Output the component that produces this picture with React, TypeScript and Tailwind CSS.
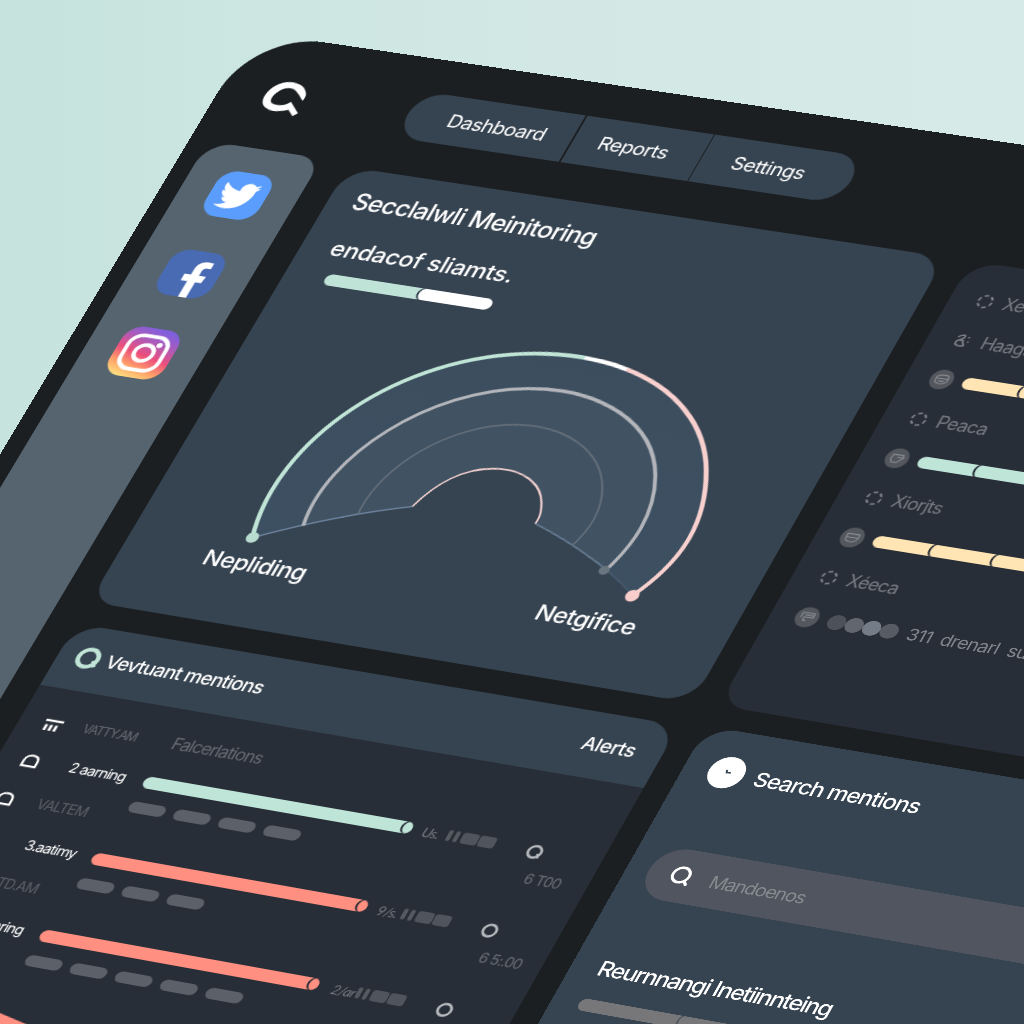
import { FaFacebookF, FaTwitter } from "react-icons/fa";
import clsx from "clsx";

interface Mention {
  label: string;
  time: string;
  stat: string;
  color: string;
  indent: string;
  labelWidth: string;
  barWidth: string;
  chips: number;
  clock: string;
  tail?: boolean;
}

const mentions: Mention[] = [
  {
    label: "2 aarning",
    time: "VALTEM",
    stat: "Us.",
    color: "bg-[#bfe4d8]",
    indent: "left-[148px]",
    labelWidth: "w-[129px]",
    barWidth: "w-[268px]",
    chips: 4,
    clock: "6 T00",
    tail: true,
  },
  {
    label: "3.aatimy",
    time: "STD.AM",
    stat: "9/s.",
    color: "bg-[#ff8f80]",
    indent: "left-[142px]",
    labelWidth: "w-[125px]",
    barWidth: "w-[274px]",
    chips: 3,
    clock: "6 5:.00",
  },
  {
    label: "3.amring",
    time: "STD.AM",
    stat: "2/ar",
    color: "bg-[#ff8f80]",
    indent: "left-[136px]",
    labelWidth: "w-[118px]",
    barWidth: "w-[277px]",
    chips: 5,
    clock: "6 5:.00",
  },
];

const App = () => {
  return (
    <div className="relative h-screen w-full overflow-hidden bg-linear-to-r from-[#c6e3dd] via-[#d2e8e4] to-[#d6ebe8] font-['Inter','Liberation_Sans',sans-serif] text-white">
      {/* tilted device */}
      <div className="flex h-[1260px] w-[1500px] origin-top-left flex-col rounded-[72px] bg-[#1b1f22] [transform:matrix3d(0.95978,0.14095,0,-0.000034617,-0.51195,0.83549,0,-0.000033957,0,0,1,0,256.7,32.4,0,1.010332)]">
        <Header />
        <div className="flex flex-1 pl-[19px]">
          <Sidebar />
          <main className="ml-[29px] flex w-[602px] flex-col gap-[25px]">
            <GaugeCard />
            <MentionsCard />
          </main>
          <aside className="ml-[25px] flex w-[650px] flex-col gap-[25px]">
            <SourcesCard />
            <SearchCard />
          </aside>
        </div>
      </div>
    </div>
  );
};

const Header = () => (
  <header className="flex h-[133px] shrink-0 items-start pl-[45px]">
    <svg viewBox="-22 -22 44 44" className="mt-[47px] h-11 w-11" fill="white">
      <path d="M18.8 -0.9 C19.5 -4 19 -7 18.2 -8.7 C14 -17 5 -20.5 -4 -19.6 C-12 -18.5 -17.5 -13 -19.4 -6.2 C-21 -1 -20.5 4 -18.4 7.6 C-15 13 -8 15.5 -1.5 14.9 C3 14.5 7 13 10.3 11.3 L17.7 17.6 L21.4 13.4 L8.3 2.1 C6 5.5 3 7.2 -0.2 7.6 C-5 8.2 -9.5 7.5 -11.1 5.1 C-13 2 -12.5 -2.5 -10.5 -5.7 C-8.5 -9.5 -6 -11.5 -3.5 -12.2 C1 -13.3 4 -12.5 6.8 -10.7 C11 -8 14.5 -4.5 18.8 -0.9 Z" />
    </svg>
    <nav className="mt-[38px] ml-[104px] flex h-[55px] w-[449px] gap-[1.5px] overflow-hidden rounded-full text-[20px] leading-[56px] tracking-tight whitespace-nowrap">
      <a className="w-[168px] bg-[#364350] pl-[42px]">Dashboard</a>
      <a className="w-[128px] bg-[#364350] pl-[26px]">Reports</a>
      <a className="flex-1 bg-[#364350] pl-[31px]">Settings</a>
    </nav>
  </header>
);

const Sidebar = () => (
  <div className="-mt-[5px] flex w-[118px] flex-col items-center gap-10 rounded-tl-[27px] rounded-tr-[23px] bg-[#56646f] pt-7">
    <div className="flex h-[53px] w-[56px] items-center justify-center rounded-[17px] bg-[#5a9dfc]">
      <FaTwitter className="h-[38px] w-[38px]" />
    </div>
    <div className="flex h-[53px] w-[56px] items-end justify-center overflow-hidden rounded-[17px] bg-[#486bb3] pl-2.5">
      <FaFacebookF className="h-[42px] w-[32px]" />
    </div>
    <svg viewBox="0 0 56 56" className="-mt-[2px] h-[57px] w-[58px]" fill="none" preserveAspectRatio="none">
      <defs>
        <linearGradient id="ig" x1="0.25" y1="1.02" x2="0.5" y2="0">
          <stop offset="0" stopColor="#ffe883" />
          <stop offset="0.25" stopColor="#ffa168" />
          <stop offset="0.5" stopColor="#ec4f7c" />
          <stop offset="0.78" stopColor="#a95bbd" />
          <stop offset="1" stopColor="#805fdc" />
        </linearGradient>
      </defs>
      <rect width="56" height="56" rx="17" fill="url(#ig)" />
      <rect x="9" y="9" width="38" height="38" rx="12" stroke="white" strokeWidth="4" />
      <circle cx="28" cy="28" r="9" stroke="white" strokeWidth="4" />
      <circle cx="38.5" cy="17.5" r="2.8" fill="white" />
    </svg>
  </div>
);

const OUTER =
  "M113.8 412.6 C82 306.4 150.5 192.8 275.5 170.2 C367.5 153.5 457.2 191.5 493.6 265.2 C522.2 322.6 517.8 365.5 491.5 407.9";
const MIDDLE =
  "M154.3 391.3 C136.7 313.7 197.3 225 287.9 208.4 C358.5 195.7 423.8 226.4 450 279 C470.8 320.8 465.6 356 454.6 385.4";
const INNER =
  "M198.5 369.3 C192.9 315 235.2 259.8 294.2 249 C341 240.5 388.6 261.6 408.1 300.5 C420.1 324.5 418.7 345.3 411.2 366.1";
const CORE =
  "M244.4 352.6 C253.2 324.5 270.9 304 298.5 299 C326 293.8 350.3 306.6 360.5 326.5 C365 335.8 367 341 366 349.5";

const GaugeCard = () => (
  <section className="relative flex h-[508px] flex-col rounded-[30px] rounded-bl-[25px] bg-[#364350] pl-[25px]">
    <h1 className="mt-[21px] text-[25px] leading-[30px] font-medium tracking-[-0.7px] whitespace-nowrap">
      Secclalwli Meinitoring
    </h1>
    <h2 className="mt-[25px] ml-[5px] text-[24px] leading-[30px] font-medium tracking-[-0.2px] whitespace-nowrap">
      endacof sliamts.
    </h2>
    <div className="mt-[13px] ml-[16px] flex h-[13px] w-[170px] overflow-hidden rounded-full">
      <div className="w-[100px] bg-[#bfe3d6]" />
      <div className="-ml-[4px] flex-1 bg-white shadow-[-2px_0_0_#364350] [border-radius:5px_0_0_5px/7px_0_0_7px]" />
    </div>
    <svg viewBox="-2 0 602 508" className="absolute inset-0 h-full w-full" fill="none">
      <defs>
        <linearGradient id="band" x1="0.5" y1="0" x2="0.5" y2="1">
          <stop offset="0" stopColor="#3c4e5e" />
          <stop offset="1" stopColor="#3d5062" />
        </linearGradient>
      </defs>
      <path
        d={`${OUTER} Q430 370 366 349.5 C367 341 365 335.8 360.5 326.5 C350.3 306.6 326 293.8 298.5 299 C270.9 304 253.2 324.5 244.4 352.6 Q180 374 113.8 412.6 Z`}
        fill="url(#band)"
      />
      <path
        d={`${MIDDLE} Q410 363 366 349.5 C367 341 365 335.8 360.5 326.5 C350.3 306.6 326 293.8 298.5 299 C270.9 304 253.2 324.5 244.4 352.6 Q200 366 154.3 391.3 Z`}
        fill="#415262"
      />
      <path d="M113.8 412.6 Q180 374 244.4 352.6" stroke="#7188a4" strokeWidth="1.6" />
      <path d="M366 349.5 Q412 364 454.6 385.4" stroke="#667c93" strokeWidth="1.6" />
      <path d="M454.6 385.4 Q475 396 491.5 407.9" stroke="#475a6d" strokeWidth="1.2" />
      <path d={CORE} stroke="#f5d3d1" strokeWidth="1.8" />
      <path d={INNER} stroke="#646f7a" strokeWidth="1.8" />
      <path d={MIDDLE} stroke="#b3b5ba" strokeWidth="3.6" />
      <path d={OUTER} stroke="#c0e5d7" strokeWidth="4.4" pathLength={100} strokeDasharray="51.5 100" />
      <path d={OUTER} stroke="white" strokeWidth="4.4" pathLength={100} strokeDasharray="0 51.4 6.2 100" />
      <path d={OUTER} stroke="#f8d1cf" strokeWidth="4.4" pathLength={100} strokeDasharray="0 57.5 43 100" />
      <circle cx="113.8" cy="412.6" r="6" fill="#b9dcd0" />
      <circle cx="453" cy="386.5" r="5" fill="#69757f" />
      <circle cx="491.5" cy="407.9" r="6.5" fill="#f8cdcc" />
    </svg>
    <div className="mt-auto mb-[52px] ml-[57px] flex w-[431px] justify-between text-[23.5px] leading-[30px] font-medium tracking-[-0.5px]">
      <span>Nepliding</span>
      <span>Netgifice</span>
    </div>
  </section>
);

const MentionsCard = () => (
  <section className="flex flex-1 flex-col overflow-hidden rounded-[30px] bg-[#282e37]">
    <div className="flex h-[70px] shrink-0 items-center bg-[#364350] pr-[26px] pl-[18px] text-[19px] font-medium tracking-[-0.7px]">
      <svg viewBox="0 0 26 26" className="-mt-[2px] h-[25px] w-[25px]" fill="none">
        <circle cx="12.5" cy="12.5" r="10" stroke="#c0e5d7" strokeWidth="4.5" />
        <path d="M19 14.5 L22.5 21.5" stroke="#c0e5d7" strokeWidth="4" />
      </svg>
      <span className="ml-[6px] whitespace-nowrap">Vevtuant mentions</span>
      <span className="mt-[1px] ml-auto tracking-[-0.4px]">Alerts</span>
    </div>
    <div className="flex h-[38px] shrink-0 items-end text-[#666b73]">
      <svg viewBox="0 0 20 14" className="mb-[-9px] ml-[24px] h-[14px] w-5" fill="none" stroke="white">
        <path d="M1 2 H19" strokeWidth="2.4" />
        <path d="M4 6.5 V13 M9 6.5 V13 M14 6.5 V13" strokeWidth="2.8" />
      </svg>
      <span className="-mb-[10px] ml-[20px] w-[90px] text-[12.5px] leading-5 tracking-[-1.2px]">VATTY.AM</span>
      <span className="-mb-[11px] text-[17px] leading-6 tracking-[-0.95px]">Falcerlations</span>
    </div>
    {mentions.map((m, i) => (
      <MentionRow key={i} mention={m} />
    ))}
    <div className="mt-[40px] ml-[130px] h-[13px] w-[280px] origin-left rotate-12 rounded-full bg-[#ff8f80]" />
  </section>
);

const MentionRow = ({ mention }: { mention: Mention }) => (
  <div className="relative h-[87px] shrink-0">
    {/* label column */}
    <div className={clsx("flex h-full flex-col pt-[27px]", mention.labelWidth)}>
      <div className="flex items-center justify-between pl-[24px]">
        <BellIcon />
        <span className="text-[14.5px] leading-[30px] tracking-[-0.9px] whitespace-nowrap">
          {mention.label}
        </span>
      </div>
      <div className="mt-[13px] flex items-center justify-between pr-[16px] pl-[21px]">
        <BellIcon />
        <span className="text-[14px] leading-[30px] tracking-[-0.8px] text-[#5b6068]">
          {mention.time}
        </span>
      </div>
    </div>

    {/* progress bar and chips share the row indent */}
    <div className={clsx("absolute top-[37px] flex flex-col", mention.indent)}>
      <div className={clsx("flex h-[13px] overflow-hidden rounded-full", mention.barWidth, mention.color)}>
        <div
          className={clsx(
            "ml-auto w-[9px] shadow-[-2px_0_0_#282e37] [border-radius:5px_0_0_5px/7px_0_0_7px]",
            mention.color,
          )}
        />
      </div>
      <div className="mt-[15px] flex gap-[9px]">
        {Array.from({ length: mention.chips }).map((_, i) => (
          <div key={i} className="h-[12px] w-[36px] rounded-[6px] bg-[#5c6068]" />
        ))}
      </div>
    </div>

    {/* stats */}
    <div className="absolute top-[36px] left-[427px] flex h-[16px] items-center gap-[3px]">
      <span className="w-[21px] font-['Lato'] text-[14px] tracking-tighter text-[#777b82] italic">{mention.stat}</span>
      <div className="h-[12px] w-[4px] rounded-[2px] bg-[#555960]" />
      <div className="h-[12px] w-[4px] rounded-[2px] bg-[#555960]" />
      <div className="h-[12px] w-[16px] rounded-[3px] bg-[#50545c]" />
      <div className="-ml-[2px] h-[12px] w-[16px] rounded-[3px] bg-[#50545c]" />
    </div>
    <div className="absolute top-[37px] left-[529px] flex flex-col">
      <svg viewBox="0 0 18 18" className="h-[17px] w-[17px]" fill="none" stroke="#b9bcc0" strokeWidth="2.6">
        <circle cx="9" cy="9" r="6.6" />
        {mention.tail && <path d="M12.5 10.5 L15 15.5" strokeWidth="2.2" />}
      </svg>
      <span className="mt-[10px] ml-[13px] text-[14px] leading-5 tracking-[-0.8px] whitespace-nowrap text-[#6b7077]">
        {mention.clock}
      </span>
    </div>
  </div>
);

const BellIcon = () => (
  <svg viewBox="0 0 20 18" className="h-[17px] w-[19px] shrink-0" fill="none" stroke="white" strokeWidth="2.5">
    <path d="M2.5 15 V9 C2.5 4.5 6 2.5 9.5 2.5 C14 2.5 17 5 17 9 V15 Z" />
  </svg>
);

const SourceLabel = ({ text, broken }: { text: string; broken?: boolean }) => (
  <div className="flex h-[45px] items-center pl-[26px]">
    {broken ? (
      <svg viewBox="0 0 16 16" className="h-4 w-4" fill="none" stroke="#80848a" strokeWidth="1.7">
        <path d="M2 5 Q3 2 7 2 Q10 4 4 8 H9 M3 8 Q0 13 5 14 H10 M8 9 L11 14 M12 3 V4.5 M13 8 V9.5" />
      </svg>
    ) : (
      <svg viewBox="0 0 16 16" className="h-4 w-4" fill="none">
        <circle cx="8" cy="8" r="6.6" stroke="#7e828a" strokeWidth="1.9" strokeDasharray="4.2 2.7" />
      </svg>
    )}
    <span className="ml-[10px] text-[18px] tracking-[-0.8px] text-[#777b82]">{text}</span>
  </div>
);

const SourceBadge = ({ shape }: { shape: string }) => (
  <svg viewBox="0 0 24 24" className="h-[23px] w-[23px] shrink-0" fill="none">
    <circle cx="12" cy="12" r="11.5" fill="#54575e" />
    <path d={shape} stroke="#8b8e94" strokeWidth="1.2" strokeLinejoin="round" />
  </svg>
);

const SourceBar = ({ shape, color }: { shape: string; color: string }) => (
  <div className="flex h-[45px] items-center pl-[23px]">
    <SourceBadge shape={shape} />
    <div className="ml-[9px] flex h-[13px] w-[420px] overflow-hidden rounded-full">
      <div className={clsx("w-[60px] shrink-0", color)} />
      {[0, 1, 2, 3, 4, 5].map((i) => (
        <div
          key={i}
          className={clsx(
            "-ml-[4px] w-[64px] shrink-0 shadow-[-2px_0_0_#282e37] [border-radius:4px_0_0_4px/7px_0_0_7px]",
            color,
          )}
        />
      ))}
    </div>
  </div>
);

const SourcesCard = () => (
  <section className="flex h-[506px] flex-col rounded-[30px] rounded-bl-[26px] bg-[#282e38] pt-[18px]">
    <SourceLabel text="Xeeca" />
    <SourceLabel text="Haagsa" broken />
    <SourceBar color="bg-[#ffe4b4]" shape="M6 9 Q12 5 18 8 V13 Q17 17 12 17 Q6 17 6 13 Z M6 11 H18 M9 14 H15" />
    <SourceLabel text="Peaca" />
    <SourceBar color="bg-[#bfe4d8]" shape="M7 8 H17 L18 11 L13 17 H8 L6 13 Z M12 11 H18" />
    <SourceLabel text="Xiorjts" />
    <SourceBar color="bg-[#ffe4b4]" shape="M6 8 H18 V12 Q17 17 12 17 Q6 17 6 13 Z M6 12 H18" />
    <SourceLabel text="Xéeca" />
    <div className="flex h-[45px] items-center pl-[23px]">
      <SourceBadge shape="M6 7 H18 V12 H9 V16 M6 7 V13 M9 9.5 H18 M9 16 H12" />
      <div className="ml-[9px] flex">
        <div className="h-4 w-[17px] rounded-full bg-[#4d5159]" />
        <div className="h-4 w-[17px] rounded-full bg-[#62666e]" />
        <div className="h-4 w-[17px] rounded-full bg-[#747d87]" />
        <div className="h-4 w-[17px] rounded-full bg-[#575b63]" />
      </div>
      <span className="ml-[9px] text-[18px] tracking-[-0.65px] whitespace-pre text-[#80838a]">
        {"311  drenarl  support"}
      </span>
    </div>
  </section>
);

const SearchCard = () => (
  <section className="-mt-[2px] flex flex-1 flex-col rounded-[30px] bg-[#364350]">
    <div className="mt-[26px] flex h-[35px] items-center pl-[24px]">
      <svg viewBox="0 0 34 34" className="h-[34px] w-[34px]" fill="none">
        <circle cx="17" cy="17" r="17" fill="white" />
        <path d="M16 14 L17 17 L21 16.5" stroke="#364350" strokeWidth="1.6" />
      </svg>
      <span className="mt-[3px] ml-[11px] text-[21.5px] font-medium tracking-[-0.9px]">Search mentions</span>
    </div>
    <div className="mt-[67px] ml-[21px] flex h-[56px] w-[600px] items-center rounded-full bg-[#50555f] pl-[21px]">
      <svg viewBox="0 0 24 24" className="h-[22px] w-[22px]" fill="none" stroke="white" strokeWidth="3">
        <circle cx="11" cy="11" r="8.5" />
        <path d="M17 17 L21 22" />
      </svg>
      <span className="ml-[17px] text-[18px] tracking-[-1px] text-[#868a8f]">Mandoenos</span>
    </div>
    <h3 className="mt-[63px] ml-[26px] text-[22px] leading-[30px] font-medium tracking-[-1.35px] whitespace-nowrap">
      Reurnnangi Inetiinnteing
    </h3>
    <div className="mt-[18px] ml-[26px] flex h-[13px] w-[500px] overflow-hidden rounded-full">
      <div className="w-[100px] bg-[#777678]" />
      <div className="-ml-[4px] flex-1 bg-[#777678] shadow-[-1.5px_0_0_#4b535c] [border-radius:4px_0_0_4px/7px_0_0_7px]" />
    </div>
  </section>
);

export default App;
